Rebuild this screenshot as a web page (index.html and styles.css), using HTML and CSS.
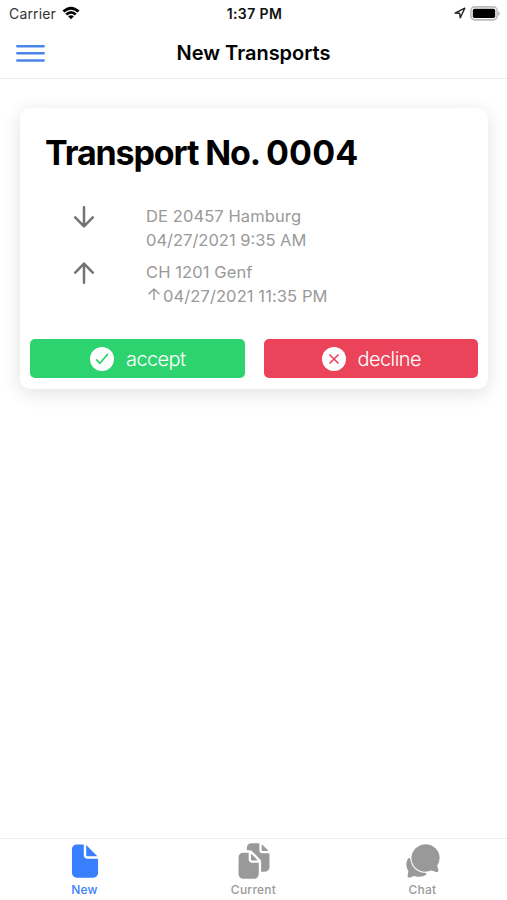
FILE: index.html
```
<!DOCTYPE html>
<html lang="en">
<head>
<meta charset="utf-8">
<title>New Transports</title>
<link rel="stylesheet" href="styles.css">
</head>
<body>
<div class="app">
  <div class="status">
    <div class="carrier"><span class="carrier-name">Carrier</span>
      <svg class="wifi" viewBox="0 0 18 14"><path d="M0.5 4.6Q9 -3.2 17.5 4.6L15.6 6.6Q9 .8 2.4 6.6ZM3.3 7.5Q9 2.5 14.7 7.5L12.8 9.4Q9 6.2 5.2 9.4ZM6.1 10.3Q9 8 11.9 10.3L9 13.3Z"/></svg>
    </div>
    <span class="time">1:37 PM</span>
    <div class="indicators">
      <svg class="location" viewBox="0 0 12 12"><path d="M1 6.1L10.8 1.2L6.3 10.8L5.7 6.3Z"/></svg>
      <svg class="battery" viewBox="0 0 30 15"><rect class="battery-case" x=".9" y=".9" width="26.2" height="13" rx="3.8"/><rect x="2.8" y="2.8" width="22.4" height="9.2" rx="1.8"/><path class="battery-tip" d="M28.2 5Q30 6 30 7.5T28.2 10Z"/></svg>
    </div>
  </div>
  <header class="toolbar">
    <svg class="menu" viewBox="0 0 29 19"><path d="M1.3 2.2H27.7M1.3 9.2H27.7M1.3 16.5H27.7"/></svg>
    <span class="title">New Transports</span>
  </header>
  <main class="content">
    <section class="card">
      <h1><span class="heading-label">Transport No.</span><span class="heading-number">0004</span></h1>
      <div class="stop">
        <svg class="arrow" viewBox="0 0 22 22"><path d="M11 1.2V20.2M2.2 11.4L11 20.3L19.8 11.4"/></svg>
        <div class="details"><div><span class="place">DE 20457 Hamburg</span></div><div>04/27/2021 9:35 AM</div></div>
      </div>
      <div class="stop">
        <svg class="arrow" viewBox="0 0 22 22"><path d="M11 20.8V1.8M2.2 10.6L11 1.7L19.8 10.6"/></svg>
        <div class="details"><div><span class="place">CH 1201 Genf</span></div><div class="eta"><svg class="small-arrow" viewBox="0 0 12 12"><path d="M6 11.6V1M1 5.8L6 .9L11 5.8"/></svg><span class="eta-time">04/27/2021 11:35 PM</span></div></div>
      </div>
      <div class="actions">
        <div class="button accept">
          <svg class="badge" viewBox="0 0 24 24"><circle cx="12" cy="12" r="12"/><path d="M6.6 12.8L9.9 16.3L17.5 7.4"/></svg><span>accept</span>
        </div>
        <div class="button decline">
          <svg class="badge" viewBox="0 0 24 24"><circle cx="12" cy="12" r="12"/><path d="M8 8L16 16M16 8L8 16"/></svg><span>decline</span>
        </div>
      </div>
    </section>
  </main>
  <nav class="tabs">
    <div class="tab active">
      <svg viewBox="0 0 512 512"><path d="M428 224H288a48 48 0 01-48-48V36a4 4 0 00-4-4h-92a64 64 0 00-64 64v320a64 64 0 0064 64h224a64 64 0 0064-64V228a4 4 0 00-4-4z"/><path d="M419.22 188.59L275.41 44.78a2 2 0 00-3.41 1.41V176a16 16 0 0016 16h129.81a2 2 0 001.41-3.41z"/></svg>
      <span>New</span>
    </div>
    <div class="tab">
      <svg viewBox="0 0 512 512"><path d="M298.39 248a4 4 0 002.86-6.8l-78.4-79.72a4 4 0 00-6.85 2.81V236a12 12 0 0012 12z"/><path d="M197 267a43.67 43.67 0 01-13-31v-92h-72a64.19 64.19 0 00-64 64v224a64 64 0 0064 64h144a64 64 0 0064-64V280h-92a43.61 43.61 0 01-31-13zM372 120h70.39a4 4 0 002.86-6.8l-78.4-79.72a4 4 0 00-6.85 2.81V108a12 12 0 0012 12z"/><path d="M372 152a44.34 44.34 0 01-44-44V16H220a60.07 60.07 0 00-60 60v36h42.12A40.81 40.81 0 01231 124.14l109.16 111a41.11 41.11 0 0111.83 29V400h53.05c32.51 0 58.95-26.92 58.95-60V152z"/></svg>
      <span>Current</span>
    </div>
    <div class="tab">
      <svg viewBox="0 0 512 512"><path d="M439.9 405.6a26.77 26.77 0 01-9.59-2l-56.78-20.13-.42-.17a9.88 9.88 0 00-3.91-.76 10.32 10.32 0 00-3.62.66c-1.38.52-13.81 5.19-26.85 8.77-7.07 1.94-31.68 8.27-51.43 8.27-50.48 0-97.68-19.4-132.89-54.63A183.38 183.38 0 01100.3 215.1a175.9 175.9 0 014.06-37.58c8.79-40.62 32.07-77.57 65.55-104A194.76 194.76 0 01290.3 30.5c52.21 0 100.86 20 137 56.18 34.16 34.27 52.88 79.33 52.73 126.87a177.86 177.86 0 01-30.3 99.15l-.19.28-.74 1c-.17.23-.34.45-.5.68l-.15.27a21.63 21.63 0 00-1.08 2.09l15.74 55.94a26.42 26.42 0 011.12 7.11 24 24 0 01-24.03 25.53z"/><path d="M299.87 425.39a15.74 15.74 0 00-10.29-8.1c-5.78-1.53-12.52-1.27-17.67-1.65a201.78 201.78 0 01-128.82-58.75A199.21 199.21 0 0186.4 244.16C85 234.42 85 232 85 232a16 16 0 00-28-10.58s-7.88 8.58-11.6 17.19a162.09 162.09 0 0011 150.06C59 393 59 395 58.42 399.5c-2.73 14.11-7.51 39-10 51.91a24 24 0 008 22.92l.46.39A24.34 24.34 0 0072 480a23.42 23.42 0 009-1.79l53.51-20.65a8.05 8.05 0 015.72 0c21.07 7.84 43 12 63.78 12a176 176 0 0074.91-16.66c5.46-2.56 14-5.34 19-11.12a15 15 0 001.95-16.39z"/></svg>
      <span>Chat</span>
    </div>
  </nav>
</div>
</body>
</html>
```

FILE: styles.css
```
* { box-sizing: border-box; }
body { margin: 0; background: #fff; color: #000; font-family: Inter, Roboto, sans-serif; }
svg { display: block; flex: none; }
.app { height: 900px; display: flex; flex-direction: column; overflow: hidden; }

.status { height: 27px; display: grid; grid-template-columns: 1fr auto 1fr; align-items: center; padding: 0 7px 0 9px; }
.carrier { display: flex; align-items: center; gap: 6px; font-size: 14px; line-height: 20px; color: #333; }
.carrier-name { letter-spacing: .15px; }
.wifi { width: 18px; height: 14px; margin-top: -1px; fill: #000; }
.time { font-size: 14px; font-weight: 600; line-height: 20px; letter-spacing: .4px; color: #111; }
.indicators { display: flex; align-items: center; justify-content: flex-end; gap: 4px; }
.location { width: 12px; height: 12px; margin-top: -1px; fill: none; stroke: #222; stroke-width: 1.4; stroke-linejoin: round; }
.battery { width: 30px; height: 15px; }
.battery-case { fill: #fff; stroke: #bbb; stroke-width: 1.6; }
.battery-tip { fill: #bbb; }

.toolbar { height: 52px; display: grid; grid-template-columns: 1fr auto 1fr; align-items: center; padding: 0 16px; border-bottom: 1px solid #ebebeb; }
.menu { width: 29px; height: 19px; margin-top: 1px; fill: none; stroke: #4a84eb; stroke-width: 2.4; stroke-linecap: round; }
.title { font-size: 20px; font-weight: 600; line-height: 26px; }

.content { flex: 1; padding: 29px 19px 0 20px; }
.card { height: 281px; border-radius: 10px; background: #fff; padding: 24px 10px 0; box-shadow: 0 4px 19px rgba(0, 0, 0, .12); }
h1 { display: flex; gap: 6px; margin: 0 0 30px 15px; font-size: 34px; line-height: 42px; font-weight: 700; white-space: nowrap; }
.heading-label { letter-spacing: -1.12px; }
.heading-number { font-weight: 650; letter-spacing: .2px; }
.stop { display: grid; grid-template-columns: 73px 1fr; height: 49px; margin: 0 0 7px 43px; }
.arrow { width: 22px; height: 22px; margin-top: 2px; fill: none; stroke: #737373; stroke-width: 2.5; stroke-linecap: round; stroke-linejoin: round; }
.details { color: #999; font-size: 16.5px; line-height: 24px; white-space: nowrap; }
.place { letter-spacing: .1px; }
.eta { display: flex; }
.eta-time { letter-spacing: .1px; }
.small-arrow { width: 12px; height: 12px; margin: 4px 3px 0 2px; fill: none; stroke: #999; stroke-width: 1.4; stroke-linecap: round; stroke-linejoin: round; }
.actions { display: grid; grid-template-columns: 1fr 1fr; gap: 19px; margin-top: 30px; }
.button { height: 39px; border-radius: 5px; display: flex; align-items: center; justify-content: center; gap: 12px; color: #fff; font-size: 20px; font-weight: 350; line-height: 28px; letter-spacing: -.6px; }
.button path { fill: none; stroke-width: 1.7; stroke-linecap: round; stroke-linejoin: round; }
.badge { width: 24px; height: 24px; margin-left: 1px; fill: #fff; }
.accept { background: #2dd36f; }
.accept path { stroke: #2dd36f; }
.decline { background: #eb445a; }
.decline path { stroke: #eb445a; }

.tabs { height: 62px; display: grid; grid-template-columns: repeat(3, 1fr); border-top: 1px solid #ececec; }
.tab { display: flex; flex-direction: column; align-items: center; padding-top: 3px; color: #999; font-size: 12px; font-weight: 500; line-height: 16px; letter-spacing: .25px; }
.tab svg { width: 38px; height: 38px; fill: currentColor; margin-bottom: 2px; }
.active { color: #3880ff; }
```
